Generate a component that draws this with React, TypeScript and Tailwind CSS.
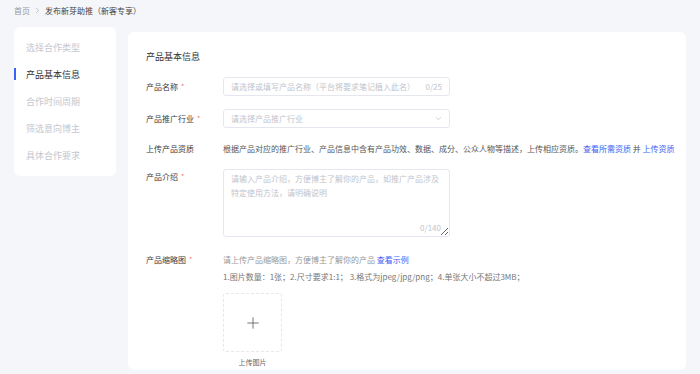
import { ChevronDown, ChevronRight, Plus } from "lucide-react";

const steps = ["选择合作类型", "产品基本信息", "合作时间周期", "筛选意向博主", "具体合作要求"];

function Label({ text, required }: { text: string; required?: boolean }) {
  return (
    <div className="flex w-[77px] shrink-0 items-start text-[8px] leading-[12px] text-[#3a3a3a]">
      {text}
      {required && <span className="ml-[3px] text-[7px] leading-[10px] text-[#f56c6c]">*</span>}
    </div>
  );
}

export default function App() {
  return (
    <div
      className="h-[374px] w-[700px] overflow-hidden bg-[#f5f6fa]"
      style={{ fontFamily: '"Noto Sans CJK SC", "Noto Sans", sans-serif' }}
    >
      <div className="flex h-[21px] items-center px-[14px] text-[8px] leading-[12px]">
        <span className="text-[#999]">首页</span>
        <ChevronRight size={9} className="mx-[3px] text-[#999]" strokeWidth={1.5} />
        <span className="text-[#444]">发布新芽助推（新客专享）</span>
      </div>

      <div className="flex items-start gap-[12px] px-[14px] pt-[6px]">
        <div className="h-[149px] w-[102px] shrink-0 rounded-[6px] bg-white pt-[7px]">
          {steps.map((s, i) => (
            <div key={s} className="relative flex h-[27px] items-center pl-[12px]">
              {i === 1 && <div className="absolute left-0 top-[7px] h-[12px] w-[2px] bg-[#3c62f6]" />}
              <span className={`text-[9px] leading-[12px] ${i === 1 ? "text-[#333]" : "text-[#c4c7cf]"}`}>{s}</span>
            </div>
          ))}
        </div>

        <div className="mt-[5px] h-[338px] w-[568px] rounded-[6px] bg-white pl-[18px] pt-[19px]">
          <div className="h-[12px] text-[9px] leading-[12px] text-[#333]">产品基本信息</div>

          <div className="mt-[14px] flex items-center">
            <Label text="产品名称" required />
            <div className="flex h-[19px] w-[227px] items-center rounded-[3px] border border-[#e4e7ed] px-[7px]">
              <input
                className="min-w-0 flex-1 bg-transparent text-[8px] text-[#333] outline-none placeholder:text-[#c0c4cc]"
                placeholder="请选择或填写产品名称（平台将要求笔记植入此名）"
              />
              <span className="ml-[4px] text-[8px] text-[#c0c4cc]">0/25</span>
            </div>
          </div>

          <div className="mt-[13px] flex items-center">
            <Label text="产品推广行业" required />
            <div className="flex h-[19px] w-[227px] items-center rounded-[3px] border border-[#e4e7ed] pl-[7px] pr-[6px]">
              <span className="flex-1 text-[8px] text-[#c0c4cc]">请选择产品推广行业</span>
              <ChevronDown size={9} className="text-[#b0b3ba]" strokeWidth={1.5} />
            </div>
          </div>

          <div className="mt-[15px] flex items-center">
            <Label text="上传产品资质" />
            <div className="text-[8px] leading-[12px] text-[#555]">
              根据产品对应的推广行业、产品信息中含有产品功效、数据、成分、公众人物等描述，上传相应资质。
              <span className="text-[#3c62f6]">查看所需资质</span> 并 <span className="text-[#3c62f6]">上传资质</span>
            </div>
          </div>

          <div className="mt-[14px] flex items-start">
            <div className="pt-[2px]">
              <Label text="产品介绍" required />
            </div>
            <div className="relative h-[68px] w-[227px]">
              <textarea
                className="h-full w-full resize rounded-[3px] border border-[#e4e7ed] px-[7px] py-[2px] text-[8px] leading-[14px] text-[#333] outline-none placeholder:text-[#c0c4cc]"
                placeholder="请输入产品介绍，方便博主了解你的产品，如推广产品涉及特定使用方法，请明确说明"
              />
              <span className="absolute bottom-[3px] right-[9px] text-[8px] leading-[12px] text-[#c0c4cc]">0/140</span>
            </div>
          </div>

          <div className="mt-[17px] flex items-start">
            <Label text="产品缩略图" required />
            <div className="flex flex-col">
              <div className="h-[12px] text-[8px] leading-[12px] text-[#999]">
                请上传产品缩略图，方便博主了解你的产品 <span className="text-[#3c62f6]">查看示例</span>
              </div>
              <div className="mt-[5px] h-[12px] text-[8px] leading-[12px] text-[#777]">
                1.图片数量：1张；2.尺寸要求1:1； 3.格式为jpeg/jpg/png；4.单张大小不超过3MB；
              </div>
              <div className="mt-[10px] flex h-[59px] w-[59px] items-center justify-center rounded-[3px] border border-dashed border-[#e4e7ed]">
                <Plus size={18} strokeWidth={1.2} className="text-[#666]" />
              </div>
              <div className="mt-[4px] w-[59px] text-center text-[7px] leading-[12px] text-[#666]">上传图片</div>
            </div>
          </div>
        </div>
      </div>
    </div>
  );
}
